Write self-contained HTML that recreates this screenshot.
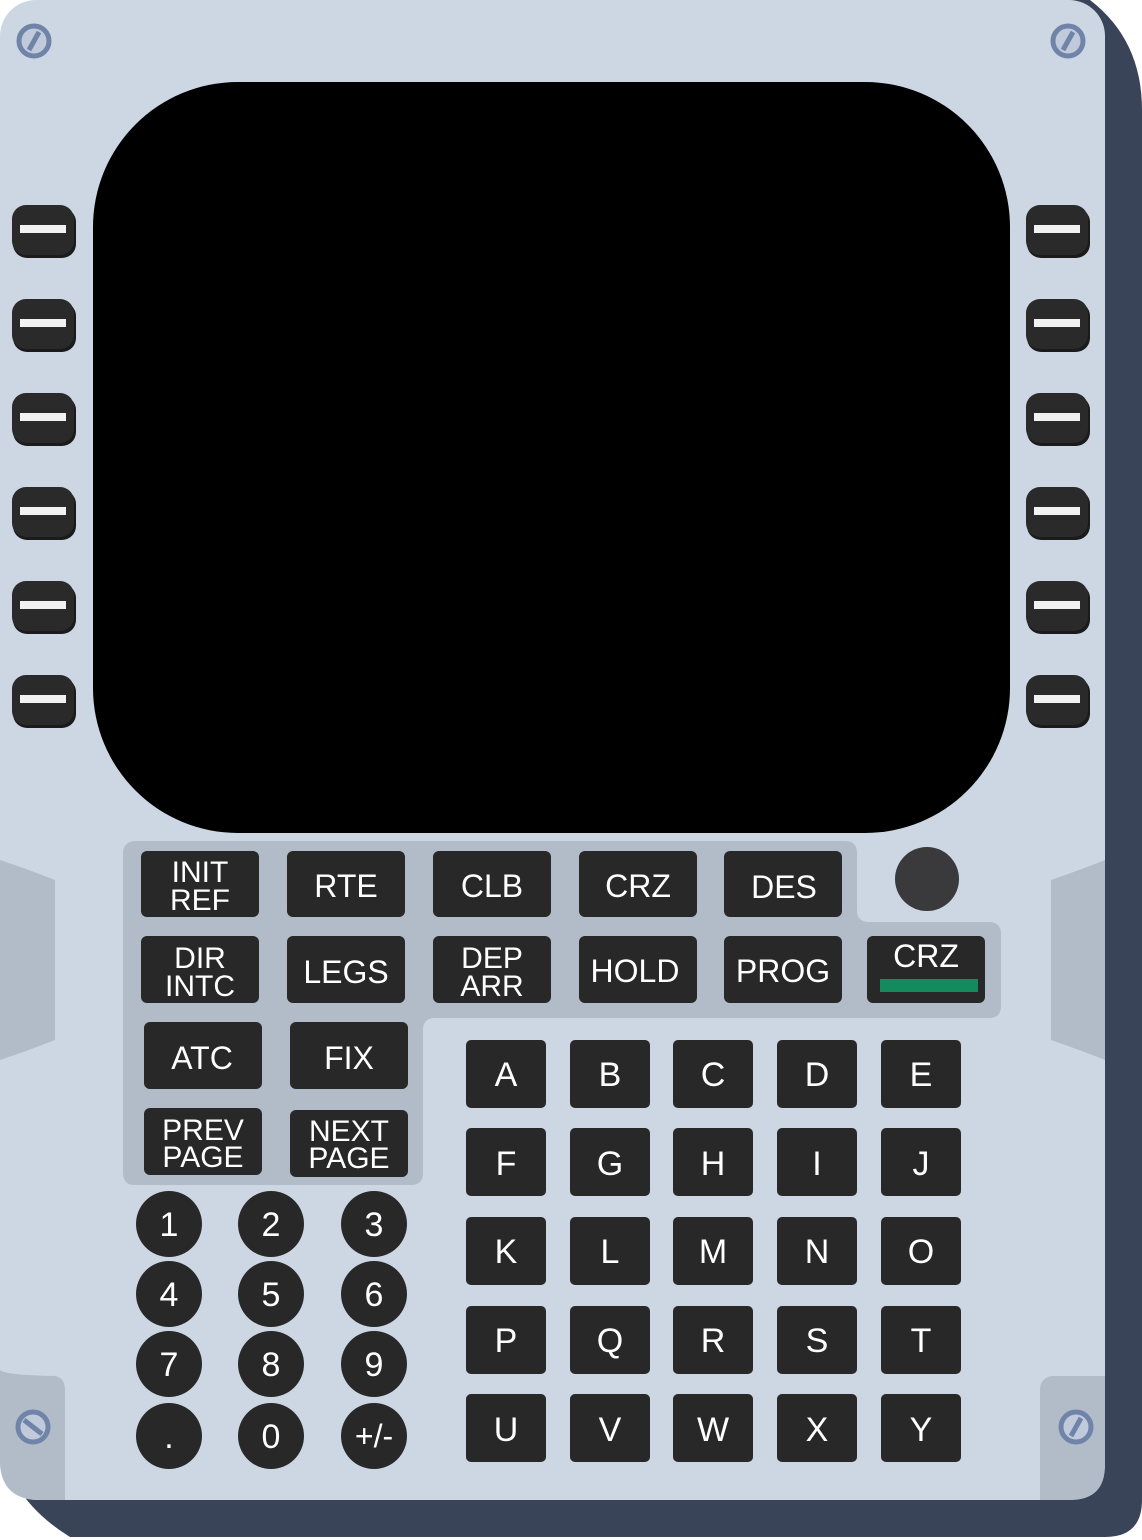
<!DOCTYPE html>
<html><head><meta charset="utf-8"><style>
html,body{margin:0;padding:0;background:#fff;width:1142px;height:1540px;overflow:hidden}
svg{display:block}
text{font-family:"Liberation Sans",sans-serif;fill:#fff;text-anchor:middle}
</style></head><body>
<svg width="1142" height="1540" viewBox="0 0 1142 1540" xmlns="http://www.w3.org/2000/svg">
<!-- dark body -->
<path d="M80 0 H1090 Q1142 40 1142 110 V1500 Q1142 1537 1105 1537 H70 Q10 1500 0 1440 Z" fill="#3a4459"/>
<!-- panel -->
<rect x="0" y="0" width="1105" height="1500" rx="36" fill="#cdd7e3"/>
<!-- side tabs -->
<path d="M0 860 Q30 870 55 880 V1040 Q30 1050 0 1060 Z" fill="#b2bcc8"/>
<path d="M1105 860 Q1080 870 1051 880 V1040 Q1080 1050 1105 1060 Z" fill="#b2bcc8"/>
<path d="M0 1370 Q5 1375 55 1376 Q65 1378 65 1390 V1500 H40 Q0 1500 0 1460 Z" fill="#b2bcc8"/>
<path d="M1105 1376 H1052 Q1040 1378 1040 1390 V1500 H1070 Q1105 1500 1105 1465 Z" fill="#b2bcc8"/>
<!-- screws -->
<g fill="#c0cadb" stroke="#6f84a8" stroke-width="5">
<circle cx="34" cy="41" r="15"/><circle cx="1068" cy="41" r="15"/>
<circle cx="33" cy="1427" r="15"/><circle cx="1076" cy="1427" r="15"/>
</g>
<g stroke="#6f84a8" stroke-width="5">
<line x1="29" y1="50" x2="39" y2="32"/><line x1="1063" y1="50" x2="1073" y2="32"/>
<line x1="24" y1="1420" x2="42" y2="1434"/><line x1="1071" y1="1436" x2="1081" y2="1418"/>
</g>
<!-- screen -->
<rect x="93" y="82" width="917" height="751" rx="145" fill="#000"/>
<!-- LSKs -->
<g id="lsk">
<g fill="#1b1b1b">
<rect x="13" y="208" width="63" height="50" rx="14"/><rect x="13" y="302" width="63" height="50" rx="14"/><rect x="13" y="396" width="63" height="50" rx="14"/><rect x="13" y="490" width="63" height="50" rx="14"/><rect x="13" y="584" width="63" height="50" rx="14"/><rect x="13" y="678" width="63" height="50" rx="14"/>
<rect x="1027" y="208" width="63" height="50" rx="14"/><rect x="1027" y="302" width="63" height="50" rx="14"/><rect x="1027" y="396" width="63" height="50" rx="14"/><rect x="1027" y="490" width="63" height="50" rx="14"/><rect x="1027" y="584" width="63" height="50" rx="14"/><rect x="1027" y="678" width="63" height="50" rx="14"/>
</g>
<g fill="#2a2a2a">
<rect x="12" y="205" width="62" height="50" rx="14"/><rect x="12" y="299" width="62" height="50" rx="14"/><rect x="12" y="393" width="62" height="50" rx="14"/><rect x="12" y="487" width="62" height="50" rx="14"/><rect x="12" y="581" width="62" height="50" rx="14"/><rect x="12" y="675" width="62" height="50" rx="14"/>
<rect x="1026" y="205" width="62" height="50" rx="14"/><rect x="1026" y="299" width="62" height="50" rx="14"/><rect x="1026" y="393" width="62" height="50" rx="14"/><rect x="1026" y="487" width="62" height="50" rx="14"/><rect x="1026" y="581" width="62" height="50" rx="14"/><rect x="1026" y="675" width="62" height="50" rx="14"/>
</g>
<g fill="#f2f2f2">
<rect x="20" y="225" width="46" height="8"/><rect x="20" y="319" width="46" height="8"/><rect x="20" y="413" width="46" height="8"/><rect x="20" y="507" width="46" height="8"/><rect x="20" y="601" width="46" height="8"/><rect x="20" y="695" width="46" height="8"/>
<rect x="1034" y="225" width="46" height="8"/><rect x="1034" y="319" width="46" height="8"/><rect x="1034" y="413" width="46" height="8"/><rect x="1034" y="507" width="46" height="8"/><rect x="1034" y="601" width="46" height="8"/><rect x="1034" y="695" width="46" height="8"/>
</g>
</g>
<!-- grey function key region -->
<path d="M137 841 H845 Q857 841 857 853 V910 Q857 922 869 922 H989 Q1001 922 1001 934 V1006 Q1001 1018 989 1018 H435 Q423 1018 423 1030 V1173 Q423 1185 411 1185 H135 Q123 1185 123 1173 V853 Q123 841 137 841 Z" fill="#b2bcc8"/>
<!-- knob -->
<circle cx="927" cy="879" r="32" fill="#3a3a3c"/>
<!-- function keys -->
<g fill="#282828">
<rect x="141" y="851" width="118" height="66" rx="6"/><rect x="287" y="851" width="118" height="66" rx="6"/><rect x="433" y="851" width="118" height="66" rx="6"/><rect x="579" y="851" width="118" height="66" rx="6"/><rect x="724" y="851" width="118" height="66" rx="6"/>
<rect x="141" y="936" width="118" height="67" rx="6"/><rect x="287" y="936" width="118" height="67" rx="6"/><rect x="433" y="936" width="118" height="67" rx="6"/><rect x="579" y="936" width="118" height="67" rx="6"/><rect x="724" y="936" width="118" height="67" rx="6"/><rect x="867" y="936" width="118" height="67" rx="6"/>
<rect x="144" y="1022" width="118" height="67" rx="6"/><rect x="290" y="1022" width="118" height="67" rx="6"/>
<rect x="144" y="1108" width="118" height="67" rx="6"/><rect x="290" y="1110" width="118" height="67" rx="6"/>
</g>
<rect x="880" y="979" width="98" height="13" fill="#158a5f"/>
<g font-size="32">
<text x="200" y="882" font-size="30">INIT</text><text x="200" y="910" font-size="30">REF</text>
<text x="346" y="897">RTE</text><text x="492" y="897">CLB</text><text x="638" y="897">CRZ</text><text x="784" y="898">DES</text>
<text x="200" y="968" font-size="30">DIR</text><text x="200" y="996" font-size="30">INTC</text>
<text x="346" y="983">LEGS</text>
<text x="492" y="968" font-size="30">DEP</text><text x="492" y="996" font-size="30">ARR</text>
<text x="635" y="982">HOLD</text><text x="783" y="982">PROG</text><text x="926" y="967">CRZ</text>
<text x="202" y="1069">ATC</text><text x="349" y="1069">FIX</text>
<text x="203" y="1140" font-size="30">PREV</text><text x="203" y="1167" font-size="30">PAGE</text>
<text x="349" y="1141" font-size="30">NEXT</text><text x="349" y="1168" font-size="30">PAGE</text>
</g>
<!-- letter keys -->
<g fill="#282828">
<rect x="466" y="1040" width="80" height="68" rx="5"/><rect x="570" y="1040" width="80" height="68" rx="5"/><rect x="673" y="1040" width="80" height="68" rx="5"/><rect x="777" y="1040" width="80" height="68" rx="5"/><rect x="881" y="1040" width="80" height="68" rx="5"/>
<rect x="466" y="1128" width="80" height="68" rx="5"/><rect x="570" y="1128" width="80" height="68" rx="5"/><rect x="673" y="1128" width="80" height="68" rx="5"/><rect x="777" y="1128" width="80" height="68" rx="5"/><rect x="881" y="1128" width="80" height="68" rx="5"/>
<rect x="466" y="1217" width="80" height="68" rx="5"/><rect x="570" y="1217" width="80" height="68" rx="5"/><rect x="673" y="1217" width="80" height="68" rx="5"/><rect x="777" y="1217" width="80" height="68" rx="5"/><rect x="881" y="1217" width="80" height="68" rx="5"/>
<rect x="466" y="1306" width="80" height="68" rx="5"/><rect x="570" y="1306" width="80" height="68" rx="5"/><rect x="673" y="1306" width="80" height="68" rx="5"/><rect x="777" y="1306" width="80" height="68" rx="5"/><rect x="881" y="1306" width="80" height="68" rx="5"/>
<rect x="466" y="1394" width="80" height="68" rx="5"/><rect x="570" y="1394" width="80" height="68" rx="5"/><rect x="673" y="1394" width="80" height="68" rx="5"/><rect x="777" y="1394" width="80" height="68" rx="5"/><rect x="881" y="1394" width="80" height="68" rx="5"/>
</g>
<g font-size="34">
<text x="506" y="1086">A</text><text x="610" y="1086">B</text><text x="713" y="1086">C</text><text x="817" y="1086">D</text><text x="921" y="1086">E</text>
<text x="506" y="1175">F</text><text x="610" y="1175">G</text><text x="713" y="1175">H</text><text x="817" y="1175">I</text><text x="921" y="1175">J</text>
<text x="506" y="1263">K</text><text x="610" y="1263">L</text><text x="713" y="1263">M</text><text x="817" y="1263">N</text><text x="921" y="1263">O</text>
<text x="506" y="1352">P</text><text x="610" y="1352">Q</text><text x="713" y="1352">R</text><text x="817" y="1352">S</text><text x="921" y="1352">T</text>
<text x="506" y="1441">U</text><text x="610" y="1441">V</text><text x="713" y="1441">W</text><text x="817" y="1441">X</text><text x="921" y="1441">Y</text>
</g>
<!-- number keys -->
<g fill="#282828">
<circle cx="169" cy="1224" r="33"/><circle cx="271" cy="1224" r="33"/><circle cx="374" cy="1224" r="33"/>
<circle cx="169" cy="1294" r="33"/><circle cx="271" cy="1294" r="33"/><circle cx="374" cy="1294" r="33"/>
<circle cx="169" cy="1364" r="33"/><circle cx="271" cy="1364" r="33"/><circle cx="374" cy="1364" r="33"/>
<circle cx="169" cy="1436" r="33"/><circle cx="271" cy="1436" r="33"/><circle cx="374" cy="1436" r="33"/>
</g>
<g font-size="34">
<text x="169" y="1236">1</text><text x="271" y="1236">2</text><text x="374" y="1236">3</text>
<text x="169" y="1306">4</text><text x="271" y="1306">5</text><text x="374" y="1306">6</text>
<text x="169" y="1376">7</text><text x="271" y="1376">8</text><text x="374" y="1376">9</text>
<text x="169" y="1448">.</text><text x="271" y="1448">0</text><text x="374" y="1447" font-size="32">+/-</text>
</g>
</svg>
</body></html>
